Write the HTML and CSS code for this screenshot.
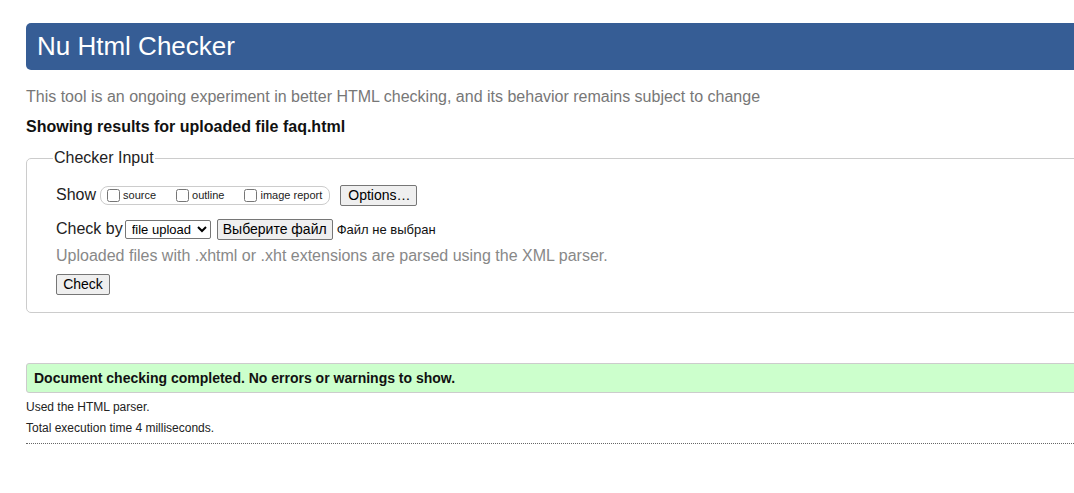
FILE: index.html
```html
<!DOCTYPE html>
<html lang="en">
<head>
<meta charset="utf-8">
<title>Showing results for faq.html - Nu Html Checker</title>
<link rel="stylesheet" href="styles.css">
</head>
<body>
<div class="page">
  <h1 class="banner">Nu Html Checker</h1>
  <p class="intro">This tool is an ongoing experiment in better HTML checking, and its behavior remains subject to change</p>
  <p class="showing">Showing results for uploaded file faq.html</p>
  <form class="checker">
    <fieldset class="input-set">
      <legend class="input-legend">Checker Input</legend>
      <div class="row show-row">
        <span class="row-label">Show</span>
        <span class="opts">
          <label class="opt"><input type="checkbox" class="cb">source</label>
          <label class="opt"><input type="checkbox" class="cb">outline</label>
          <label class="opt"><input type="checkbox" class="cb">image report</label>
        </span>
        <button type="button" class="btn options-btn">Options…</button>
      </div>
      <div class="row check-row">
        <span class="row-label">Check by</span>
        <select class="sel"><option>file upload</option></select>
        <button type="button" class="btn file-btn">Выберите файл</button>
        <span class="nofile">Файл не выбран</span>
      </div>
      <p class="hint">Uploaded files with .xhtml or .xht extensions are parsed using the XML parser.</p>
      <div class="row submit-row">
        <button type="button" class="btn check-btn">Check</button>
      </div>
    </fieldset>
  </form>
  <div class="success">Document checking completed. No errors or warnings to show.</div>
  <p class="details">Used the HTML parser.</p>
  <p class="details">Total execution time 4 milliseconds.</p>
  <hr class="dotted">
</div>
</body>
</html>
```

FILE: styles.css
```css
html {
  overflow: hidden;
  background: #fff;
}
body {
  margin: 0;
  font-family: "Liberation Sans", Arial, sans-serif;
  color: #000;
}
.page {
  width: 1150px;
  padding: 23px 0 0 26px;
}
.banner {
  margin: 0;
  height: 47px;
  line-height: 47px;
  padding-left: 11px;
  background: #365d95;
  color: #fff;
  font-size: 26px;
  font-weight: normal;
  border-radius: 5px;
}
.intro {
  margin: 18px 0 0;
  font-size: 16px;
  line-height: 18px;
  color: #777;
}
.showing {
  margin: 12px 0 0;
  font-size: 16px;
  line-height: 18px;
  font-weight: bold;
  color: #111;
}
.checker {
  margin: 13px 0 0;
}
.input-set {
  margin: 0;
  padding: 17px 0 17px 29px;
  border: 1px solid #ccc;
  border-radius: 5px;
  min-width: 0;
}
.input-legend {
  font-size: 16px;
  line-height: 18px;
  padding: 0 1px;
  margin-left: -3px;
  color: #222;
}
.row {
  display: flex;
  align-items: center;
  height: 22px;
}
.row-label {
  font-size: 16px;
  color: #222;
}
.show-row .row-label {
  margin-right: 4px;
}
.opts {
  display: inline-flex;
  align-items: center;
  height: 17px;
  padding: 0 7px 0 5px;
  border: 1px solid #ccc;
  border-radius: 8px;
}
.opt {
  display: inline-flex;
  align-items: center;
  font-size: 11px;
  color: #222;
  margin-right: 19px;
}
.opt:last-child {
  margin-right: 0;
}
.cb {
  margin: 0 3px 0 1px;
  width: 13px;
  height: 13px;
}
.btn {
  font-family: "Liberation Sans", Arial, sans-serif;
  font-size: 14px;
  color: #000;
  background: #efefef;
  border: 1px solid #767676;
  border-radius: 2px;
  padding: 0 7px;
  height: 21px;
  line-height: 19px;
}
.options-btn {
  margin-left: 10px;
  width: 77px;
}
.check-row {
  margin-top: 12px;
}
.check-row .row-label {
  margin-right: 2px;
}
.sel {
  font-family: "Liberation Sans", Arial, sans-serif;
  font-size: 13px;
  height: 19px;
  width: 86px;
  padding: 0 0 0 2px;
  border: 1px solid #767676;
  border-radius: 2px;
  background: #fff;
  color: #000;
}
.file-btn {
  margin-left: 6px;
  width: 116px;
  padding: 0;
}
.nofile {
  margin-left: 4px;
  font-size: 13px;
  color: #111;
}
.hint {
  margin: 7px 0 0;
  font-size: 16px;
  line-height: 18px;
  color: #888;
}
.submit-row {
  margin-top: 9px;
  height: 21px;
}
.check-btn {
  width: 54px;
  padding: 0;
}
.success {
  margin-top: 50px;
  height: 28px;
  line-height: 28px;
  padding-left: 7px;
  background: #ccffcc;
  border: 1px solid #ccc;
  border-radius: 3px;
  font-size: 14px;
  font-weight: bold;
  color: #111;
}
.details {
  margin: 7px 0 0;
  font-size: 12px;
  line-height: 14px;
  color: #222;
}
.details + .details {
  margin-top: 7px;
}
.dotted {
  margin: 8px 0 0;
  border: 0;
  border-top: 1px dotted #666;
  height: 0;
}
```
